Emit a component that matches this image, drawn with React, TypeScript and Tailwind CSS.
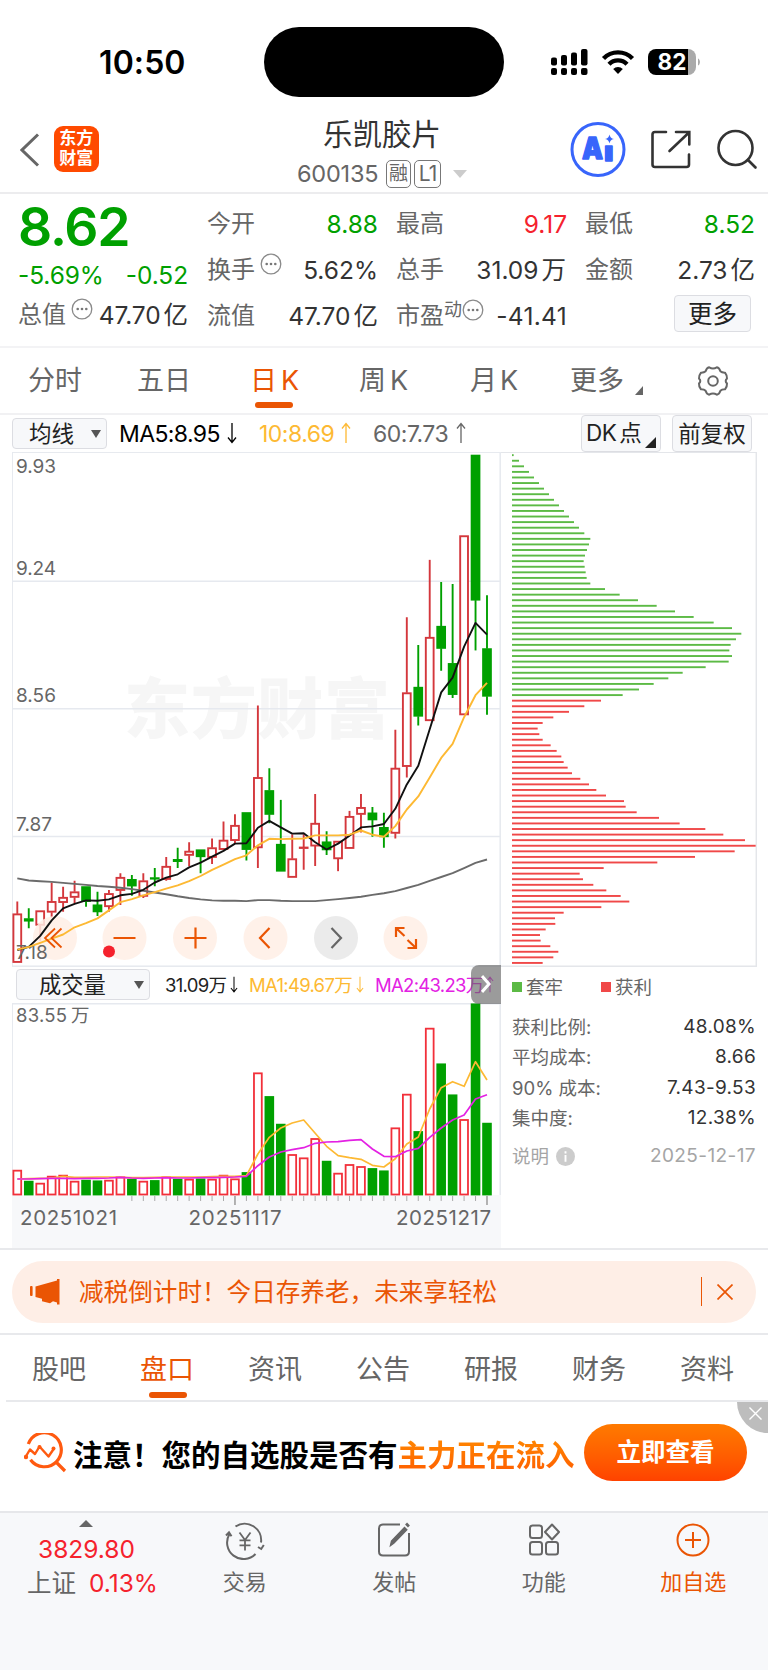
import { ReactNode } from "react";

// [high, top, bottom, low, rising] for each day, measured down from the top of the chart
type Candle = [number, number, number, number, 0 | 1];

const candles: Candle[] = [
  [1340, 1376, 1517, 1517, 1],
  [1360, 1390, 1397, 1418, 0],
  [1367, 1367, 1409, 1455, 1],
  [1285, 1340, 1371, 1387, 1],
  [1297, 1328, 1343, 1370, 1],
  [1280, 1312, 1328, 1345, 1],
  [1297, 1297, 1340, 1355, 0],
  [1312, 1350, 1370, 1382, 0],
  [1307, 1317, 1355, 1370, 1],
  [1258, 1270, 1308, 1350, 1],
  [1263, 1276, 1295, 1323, 0],
  [1258, 1280, 1325, 1330, 1],
  [1243, 1271, 1275, 1296, 0],
  [1211, 1238, 1276, 1280, 1],
  [1184, 1218, 1224, 1243, 0],
  [1168, 1194, 1206, 1238, 1],
  [1190, 1190, 1210, 1258, 0],
  [1157, 1184, 1212, 1231, 1],
  [1108, 1162, 1189, 1190, 1],
  [1087, 1119, 1163, 1170, 1],
  [1082, 1082, 1189, 1221, 0],
  [771, 980, 1184, 1243, 1],
  [953, 1018, 1087, 1113, 0],
  [1045, 1174, 1252, 1252, 0],
  [1145, 1216, 1270, 1270, 1],
  [1145, 1182, 1186, 1248, 1],
  [1028, 1113, 1179, 1237, 1],
  [1136, 1167, 1190, 1205, 0],
  [1165, 1165, 1216, 1252, 1],
  [1077, 1093, 1186, 1186, 1],
  [1028, 1067, 1087, 1140, 1],
  [1066, 1083, 1103, 1152, 0],
  [1082, 1125, 1152, 1184, 0],
  [841, 953, 1142, 1157, 1],
  [515, 734, 948, 980, 1],
  [595, 718, 802, 829, 0],
  [348, 573, 815, 815, 1],
  [412, 541, 605, 670, 0],
  [418, 649, 739, 749, 0],
  [278, 278, 798, 798, 1],
  [44, 44, 465, 611, 0],
  [451, 606, 744, 798, 0],
];

const ma5 = [
  1481, 1472, 1440, 1395, 1360, 1347, 1337, 1338, 1334, 1322, 1318, 1306, 1285, 1271, 1261, 1241, 1227, 1210, 1193, 1172, 1171,
  1126, 1106, 1125, 1143, 1142, 1168, 1189, 1172, 1149, 1125, 1122, 1115, 1071, 1000, 946, 840, 733, 690, 600, 531, 565,
];
const ma10 = [
  1480, 1472, 1460, 1448, 1436, 1415, 1403, 1389, 1366, 1342, 1333, 1322, 1313, 1303, 1293, 1281, 1266, 1248, 1233, 1217, 1206,
  1177, 1158, 1159, 1158, 1157, 1148, 1148, 1148, 1146, 1134, 1146, 1152, 1121, 1073, 1035, 980, 923, 882, 805, 741, 705,
];
const ma60 = [
  1273, 1279, 1281, 1283, 1286, 1289, 1292, 1295, 1297, 1300, 1304, 1309, 1314, 1319, 1325, 1330, 1334, 1337, 1338, 1338, 1339,
  1336, 1336, 1338, 1339, 1339, 1339, 1336, 1333, 1330, 1326, 1321, 1316, 1310, 1301, 1292, 1280, 1269, 1258, 1243, 1228, 1218,
];

const volumes = [
  630, 663, 669, 648, 645, 663, 660, 662, 660, 650, 657, 663, 661, 650, 657, 657, 656, 657, 645, 656, 637,
  338, 409, 492, 583, 593, 535, 603, 639, 613, 619, 625, 632, 503, 402, 514, 204, 311, 404, 478, 131, 489,
];
const volMa1 = [
  658, 657, 656, 655, 650, 653, 653, 652, 652, 653, 654, 654, 653, 652, 652, 652, 652, 651, 650, 650, 648,
  583, 533, 505, 490, 481, 521, 560, 588, 594, 599, 617, 622, 597, 553, 532, 448, 384, 366, 380, 306, 361,
];
const volMa2 = [
  658, 658, 657, 656, 656, 657, 656, 656, 655, 653, 655, 656, 655, 654, 655, 655, 654, 654, 653, 652, 650,
  618, 592, 577, 570, 564, 551, 547, 546, 542, 540, 568, 590, 591, 574, 566, 533, 505, 481, 466, 418, 405,
];

// chip distribution, top price to bottom price
const trapped = [
  5, 21, 36, 51, 66, 81, 96, 111, 126, 141, 156, 171, 186, 201, 217, 235, 231, 225, 219, 215, 218, 221, 224, 235, 279, 323, 378,
  434, 489, 545, 605, 660, 688, 672, 656, 652, 660, 650, 581, 512, 469, 425, 381, 332,
];
const profit = [
  267, 217, 171, 124, 92, 77, 82, 92, 116, 134, 148, 155, 167, 180, 205, 231, 253, 282, 336, 341, 374, 441, 503, 580, 634, 699,
  731, 668, 549, 436, 275, 203, 213, 244, 283, 326, 352, 268, 155, 129, 130, 101, 84, 86, 115, 139, 124, 92,
];

const x = (i: number) => 5.3 + i * 11.456;
const y = (v: number) => v / 2.9037 - 12;
const vy = (v: number) => (v - 130) / 3;

const line = (data: number[], scale: (v: number) => number) =>
  data.map((v, i) => `${x(i).toFixed(1)},${scale(v).toFixed(1)}`).join(" ");

function Arrow({ up, className }: { up?: boolean; className?: string }) {
  return (
    <svg viewBox="0 0 10 22" className={className} fill="none" stroke="currentColor" strokeWidth="1.3">
      {up ? <path d="M5 21V1.5M1 6.5l4-5 4 5" /> : <path d="M5 1v19.5M1 15.5l4 5 4-5" />}
    </svg>
  );
}

function Dots() {
  return (
    <svg viewBox="0 0 22 22" className="w-[22px] h-[22px] -mt-3 shrink-0" fill="none" stroke="#8a8a8a" strokeWidth="1.3">
      <circle cx="11" cy="11" r="9.8" />
      <g fill="#777" stroke="none">
        <circle cx="6.7" cy="11" r="1.3" />
        <circle cx="11" cy="11" r="1.3" />
        <circle cx="15.3" cy="11" r="1.3" />
      </g>
    </svg>
  );
}

function Stat({ label, value, color = "text-[#333]" }: { label: ReactNode; value: ReactNode; color?: string }) {
  return (
    <div className="h-[46px] flex items-center justify-between">
      <span className="flex items-center text-[#666] text-[24px]">{label}</span>
      <span className={color}>{value}</span>
    </div>
  );
}

function StatusBar() {
  return (
    <div className="h-[98px] flex shrink-0 relative">
      <div className="w-[264px] pl-[99px] pt-[43px] text-[32px] leading-[40px] font-semibold text-black tracking-[0.1px]">10:50</div>
      <div className="mt-[27px] w-[240px] h-[70px] rounded-full bg-black" />
      <svg viewBox="0 0 160 30" className="ml-[45px] mt-[47px] w-[160px] h-[30px]">
        <g fill="#000">
          <rect x="2" y="10.5" width="6" height="8" rx="2" />
          <rect x="12" y="8" width="6" height="10.5" rx="2" />
          <rect x="22" y="5.5" width="6" height="13" rx="2" />
          <rect x="32" y="2" width="6.5" height="16.5" rx="2" />
          <rect x="2" y="21" width="6" height="7" rx="2" />
          <rect x="12" y="21" width="6" height="7" rx="2" />
          <rect x="22" y="21" width="6" height="7" rx="2" />
          <rect x="32" y="21" width="6.5" height="7" rx="2" />
        </g>
        <g fill="none" stroke="#000" strokeWidth="4.4">
          <path d="M54.5 11.5a20.3 20.3 0 0 1 29 0" />
          <path d="M60 17.2a12.6 12.6 0 0 1 18 0" />
        </g>
        <path d="M69 27l-4.8-5a6.8 6.8 0 0 1 9.6 0z" fill="#000" />
        <path d="M107 2h32v26h-32a8 8 0 0 1-8-8v-10a8 8 0 0 1 8-8z" fill="#000" />
        <path d="M139 2a8 8 0 0 1 8 8v10a8 8 0 0 1-8 8z" fill="#aaa" />
        <path d="M149 11.5c2.6 1 2.6 6 0 7z" fill="#aaa" />
        <text x="123" y="23.3" fontSize="22.5" fontWeight="700" fill="#fff" textAnchor="middle">82</text>
      </svg>
    </div>
  );
}

function Header() {
  return (
    <div className="h-[96px] flex items-start border-b-2 border-[#ececee]">
      <svg viewBox="0 0 20 34" className="ml-[20px] mt-[35px] w-[20px] h-[34px]" fill="none" stroke="#666" strokeWidth="3">
        <path d="M18 1.5L2 17l16 15.500" />
      </svg>
      <div className="ml-[13.500px] mt-[28px] w-[45.500px] h-[46px] rounded-[9px] bg-[#ff4a00] text-white text-[17px] leading-[19.500px] font-semibold text-center pt-[3px]">
        东方
        <br />
        财富
      </div>
      <div className="ml-[198px] mt-[17px] w-[170px] flex flex-col">
        <div className="ml-[26px] h-[39px] text-[29.500px] leading-[38px] text-[#333] whitespace-nowrap">乐凯胶片</div>
        <div className="mt-[5px] flex items-center h-[30px] text-[23.500px] leading-[30px] text-[#666]">
          <span className="w-[89px] tracking-[-0.2px]">600135</span>
          <span className="w-[25px] h-[28px] rounded-[5px] border-[1.500px] border-[#777] text-[19px] leading-[25px] text-center">融</span>
          <span className="ml-[3px] w-[27px] h-[28px] rounded-[5px] border-[1.500px] border-[#777] text-[21px] leading-[25px] text-center tracking-[-1px]">L1</span>
          <svg viewBox="0 0 14 8" className="ml-[12px] w-[14px] h-[8px] shrink-0">
            <path d="M0 0h14L7 8z" fill="#ccc" />
          </svg>
        </div>
      </div>
      <svg viewBox="0 0 200 60" className="ml-[103px] mt-[22px] w-[200px] h-[60px] shrink-0 -mr-4" fill="none">
        <circle cx="28" cy="29.500" r="26" stroke="#3865fb" strokeWidth="3" />
        <g fill="#3865fb" stroke="#3865fb" strokeWidth="1.400" strokeLinejoin="round" fontWeight="900">
          <text x="12" y="39" fontSize="30" textLength="21" lengthAdjust="spacingAndGlyphs">A</text>
          <text x="34" y="40.500" fontSize="27" textLength="9.500" lengthAdjust="spacingAndGlyphs">ı</text>
        </g>
        <path d="M39.500 14.500c.8 3 1.500 3.700 4.500 4.500-3 .8-3.700 1.500-4.500 4.500-.8-3-1.500-3.700-4.500-4.500 3-.8 3.700-1.500 4.500-4.500z" fill="#3865fb" />
        <g stroke="#333" strokeWidth="2.600" strokeLinecap="round">
          <path d="M96 12H85q-2.500 0-2.500 2.500v30q0 2.500 2.500 2.500h31.500q2.500 0 2.500-2.500V34.500" />
          <path d="M106 12h13.300v12.500M119 12.500L99.500 31" />
          <circle cx="165.500" cy="28" r="17" />
          <path d="M178 40l7.500 7.500" />
        </g>
      </svg>
    </div>
  );
}

function Quote() {
  return (
    <div className="h-[154px] pt-[7px] pl-[18px] pr-[13px] grid grid-cols-4 gap-x-[19px] text-[24.500px] leading-[30px] whitespace-nowrap border-b-2 border-[#f3f3f5]">
      <div>
        <div className="h-[53px] -mt-px flex items-center text-[53.500px] leading-[53px] font-semibold text-[#00a000] tracking-[-1.200px]">8.62</div>
        <div className="h-[45px] flex items-center justify-between text-[#00a000] tracking-[-0.100px]">
          <span>-5.69%</span>
          <span>-0.52</span>
        </div>
        <div className="h-[34px] flex items-center justify-between text-[#333] tracking-[-0.100px]">
          <span className="flex items-center text-[#666] text-[24px]">总值<span className="w-[5px]" /><Dots /></span>
          <span>47.70<span className="ml-[3px]">亿</span></span>
        </div>
      </div>
      <div>
        <Stat label="今开" value="8.88" color="text-[#00a000] -mr-px" />
        <Stat label={<>换手<span className="w-[5px]" /><Dots /></>} value="5.62%" color="text-[#333] -mr-px" />
        <Stat label="流值" value={<>47.70<span className="ml-[3px]">亿</span></>} color="text-[#333] -mr-px" />
      </div>
      <div>
        <Stat label="最高" value="9.17" color="text-[#f5222d] -mr-px" />
        <Stat label="总手" value={<>31.09<span className="ml-[3px]">万</span></>} />
        <Stat label={<>市盈<span className="text-[18px] -mt-3">动</span><Dots /></>} value="-41.41" color="text-[#333] -mr-px tracking-[0.3px]" />
      </div>
      <div>
        <Stat label="最低" value="8.52" color="text-[#00a000]" />
        <Stat label="金额" value={<>2.73<span className="ml-[3px]">亿</span></>} />
        <div className="h-[42px] flex items-center justify-end pr-1">
          <span className="w-[77px] h-[37px] rounded-[4px] border border-[#dcdde2] bg-[#f7f8fa] text-[#222] text-center leading-[36px]">更多</span>
        </div>
      </div>
    </div>
  );
}

function PeriodTabs() {
  return (
    <div className="h-[67px] flex items-center pt-[2px] border-b-2 border-[#f1f1f3] text-[27px] leading-[40px] text-[#666] whitespace-nowrap">
      <span className="w-[110px] pl-[28px]">分时</span>
      <span className="w-[115px] pl-[27px]">五日</span>
      <span className="w-[108px] pl-[25px] flex text-[#ea5504] relative">
        日<span className="ml-[4px]">K</span>
        <span className="absolute left-[30px] top-[41px] w-[38px] h-[6px] rounded-full bg-[#ea5504]" />
      </span>
      <span className="w-[112px] pl-[26px] flex">周<span className="ml-[4px]">K</span></span>
      <span className="w-[98px] pl-[25px] flex">月<span className="ml-[3px]">K</span></span>
      <span className="w-[152px] pl-[27px] flex items-center">
        更多
        <svg viewBox="0 0 8 9" className="ml-[11px] mt-[18px] w-[8px] h-[9px]"><path d="M8 0v9H0z" fill="#666" /></svg>
      </span>
      <svg viewBox="0 0 32 32" className="ml-[2px] w-[32px] h-[32px] -mt-px" fill="none" stroke="#666" strokeWidth="2">
        <path d="M12.200 2.300q3.800 2.200 7.600 0 2.600.6 3.600 4 1.500 1.500 4.600 1.400 2.300 3 2 5.800-2.600 2.500 0 5 .3 2.800-2 5.800-3.100-.1-4.600 1.400-1 3.400-3.600 4-3.800-2.200-7.600 0-2.600-.6-3.600-4-1.500-1.500-4.600-1.400-2.300-3-2-5.800 2.600-2.500 0-5-.3-2.800 2-5.800 3.100.1 4.600-1.400 1-3.400 3.600-4z" strokeLinejoin="round" />
        <circle cx="16" cy="16" r="4.800" />
      </svg>
    </div>
  );
}

function ChartToolbar() {
  return (
    <div className="h-[37px] flex items-center pl-[12px] pr-[16px] text-[22.500px] leading-[28px] whitespace-nowrap">
      <div className="w-[95px] h-[31px] mt-px flex items-center pl-[16px] rounded-[4px] border border-[#dcdde2] bg-[#f7f8fa] text-[#222]">
        均线
        <svg viewBox="0 0 10 8" className="ml-[17px] w-[10px] h-[8px]"><path d="M0 0h10L5 8z" fill="#555" /></svg>
      </div>
      <span className="ml-[12px] mt-px w-[108px] text-black text-[23px] tracking-[-0.600px]">MA5:8.95</span>
      <Arrow className="w-[10px] h-[22px]" />
      <span className="ml-[22px] mt-px w-[82px] text-[#fdb933] text-[23px] tracking-[-0.500px]">10:8.69</span>
      <Arrow up className="w-[10px] h-[22px] text-[#fdb933]" />
      <span className="ml-[22px] mt-px w-[83px] text-[#666] text-[23px] tracking-[-0.500px]">60:7.73</span>
      <Arrow up className="w-[10px] h-[22px] text-[#666]" />
      <div className="ml-auto w-[80px] h-[37px] flex items-center pl-[4px] rounded-[4px] border border-[#dcdde2] bg-[#f7f8fa] text-[#222] tracking-[-0.500px]">
        DK<span className="ml-[3px]">点</span>
        <svg viewBox="0 0 11 11" className="ml-auto mr-[4px] mt-[18px] w-[11px] h-[11px]"><path d="M11 0v11H0z" fill="#222" /></svg>
      </div>
      <div className="ml-[11px] w-[80px] h-[37px] leading-[36px] text-center rounded-[4px] border border-[#dcdde2] bg-[#f7f8fa] text-[#222]">前复权</div>
    </div>
  );
}

function KLine() {
  return (
    <svg viewBox="0 0 489 515" className="block w-[489px] h-[515px]">
      <text x="112" y="281" fontSize="66" fontWeight="900" fill="#f6f6f6" textLength="266">东方财富</text>
      <g stroke="#e6e9ef" strokeWidth="1.500" fill="none">
        <path d="M0 129.300H489M0 256.700H489M0 384.500H489" />
        <rect x=".2" y=".2" width="488" height="514" />
      </g>
      {candles.map(([high, top, bottom, low, up], i) => (
        <g key={i} stroke={up ? "#d4373c" : "#00a000"} fill={up ? "#fff" : "#00a000"} strokeWidth="1.900">
          <path d={`M${x(i)} ${y(high)}V${y(top)}M${x(i)} ${y(bottom)}V${y(low)}`} />
          <rect x={x(i) - 3.9} y={y(top) + 0.5} width="7.800" height={Math.max(y(bottom) - y(top) - 1, 0.4)} />
        </g>
      ))}
      <g fill="#ffeee5" fillOpacity=".85">
        <circle cx="43" cy="486" r="22" />
        <circle cx="112.500" cy="486" r="22" />
        <circle cx="183" cy="486" r="22" />
        <circle cx="253.500" cy="486" r="22" />
        <circle cx="324" cy="486" r="22" fill="#e8e8e8" />
        <circle cx="393.500" cy="486" r="22" />
      </g>
      <g fontSize="19" fill="#666">
        <text x="4" y="20.500" textLength="40">9.93</text>
        <text x="4" y="122.500" textLength="40">9.24</text>
        <text x="4" y="250" textLength="40">8.56</text>
        <text x="4" y="378.500">7.87</text>
        <text x="4" y="507">7.18</text>
      </g>
      <g fill="none" strokeWidth="1.900" strokeLinejoin="round">
        <polyline points={line(ma60, y)} stroke="#6b6b6b" />
        <polyline points={line(ma5, y)} stroke="#111" />
        <polyline points={line(ma10, y)} stroke="#fdb933" />
      </g>
      <g fill="none" stroke="#ea5504" strokeWidth="2.200">
        <path d="M43 476.500L33 486l10 9.500M49.500 476.500l-10 9.500 10 9.500" strokeWidth="1.800" />
        <path d="M101.500 486h22M172.500 486h22M183.500 475.500v21" />
        <path d="M257.500 476l-9.500 10 9.500 10" />
        <path d="M319.500 476l9.500 10-9.500 10" stroke="#666" />
        <path d="M384 485v-9h8.500M384.500 476.500l8 7.500M404 487v9h-8.500M403.500 495.500l-8-7.500" />
      </g>
      <circle cx="97" cy="499.500" r="6" fill="#f5222d" />
    </svg>
  );
}

function Volume() {
  return (
    <svg viewBox="0 0 489 245" className="block w-[489px] h-[245px]">
      <rect y="192" width="489" height="53" fill="#f7f8fa" />
      <path d="M.2 192V.7H488.200V192" stroke="#e6e9ef" strokeWidth="1.500" fill="none" />
      <g fontSize="18.500" fill="#666">
        <text x="4" y="19" textLength="51">83.55</text>
        <text x="59" y="19">万</text>
      </g>
      {volumes.map((v, i) => {
        const up = candles[i][4];
        return (
          <rect
            key={i}
            x={x(i) - 3.9}
            y={vy(v) + 1}
            width="7.800"
            height={190.5 - vy(v)}
            fill={up ? "#fff" : "#00a000"}
            stroke={up ? "#f2303a" : "#00a000"}
            strokeWidth="1.800"
          />
        );
      })}
      <g fill="none" strokeWidth="1.700" strokeLinejoin="round">
        <polyline points={line(volMa1, vy)} stroke="#fdb933" />
        <polyline points={line(volMa2, vy)} stroke="#e321e3" />
      </g>
      {volumes.map((_, i) =>
        i > 9 ? <path key={i} d={`M${x(i)} 193v${i === 19 || i === 41 ? 9 : 5}`} stroke="#aaa" strokeWidth={i === 19 || i === 41 ? 1.8 : 1} /> : null
      )}
      <g fontSize="20.500" fill="#666">
        <text x="8" y="222" textLength="97">20251021</text>
        <text x="176.500" y="222" textLength="93">20251117</text>
        <text x="384" y="222" textLength="95">20251217</text>
      </g>
    </svg>
  );
}

function Chips() {
  return (
    <svg viewBox="0 0 256 515" className="block w-[256px] h-[515px]">
      <path d="M0 .2H255.300V514.200H0" stroke="#e4e6ea" strokeWidth="1.500" fill="none" />
      {[...trapped, ...profit].map((w, i) => (
        <rect key={i} x="11" y={2.2 + i * 5.58} width={w / 3} height="1.900" fill={i < trapped.length ? "#5cba45" : "#f04848"} />
      ))}
    </svg>
  );
}

const costs = [
  ["获利比例:", "48.08%"],
  ["平均成本:", "8.66"],
  ["90% 成本:", "7.43-9.53"],
  ["集中度:", "12.38%"],
];

function Charts() {
  return (
    <div className="h-[798px] flex pl-[12px] border-b-2 border-[#e8e9ec]">
      <div className="w-[489px]">
        <KLine />
        <div className="h-[36px] relative flex items-center pl-[4px] text-[18.500px] leading-[30px] whitespace-nowrap">
          <div className="w-[134px] h-[31px] flex items-center pl-[22px] rounded-[4px] border border-[#dcdde2] bg-[#f7f8fa] text-[22.300px] text-[#222]">
            成交量
            <svg viewBox="0 0 10 8" className="ml-[28px] w-[10px] h-[8px]"><path d="M0 0h10L5 8z" fill="#555" /></svg>
          </div>
          <span className="ml-[15px] w-[65px] text-[#222] tracking-[-0.700px]">31.09万</span>
          <Arrow className="w-[8px] h-[17px]" />
          <span className="ml-[11px] w-[107px] text-[#fdb933] tracking-[-0.700px]">MA1:49.67万</span>
          <Arrow className="w-[8px] h-[17px] text-[#fdb933]" />
          <span className="ml-[11px] w-[111px] text-[#e321e3] tracking-[-0.700px]">MA2:43.23万</span>
          <Arrow up className="w-[8px] h-[17px] text-[#e321e3]" />
          <div className="absolute right-0 -top-[2px] w-[30px] h-[39px] rounded-l-[8px] bg-[#666]/65 flex items-center justify-center">
            <svg viewBox="0 0 10 18" className="w-[10px] h-[18px]" fill="none" stroke="#fff" strokeWidth="3"><path d="M1 1l7 8-7 8" /></svg>
          </div>
        </div>
        <Volume />
      </div>
      <div className="w-[256px]">
        <Chips />
        <div className="pl-[11px] pr-px text-[18.500px] leading-[30px] text-[#666]">
          <div className="h-[41px] flex items-center">
            <span className="w-[10px] h-[10px] bg-[#5cba45]" />
            <span className="ml-[4px] w-[75px]">套牢</span>
            <span className="w-[10px] h-[10px] bg-[#f04848]" />
            <span className="ml-[4px]">获利</span>
          </div>
          <div className="pt-[4px]">
            {costs.map(([label, value]) => (
              <div key={label} className="h-[30.500px] flex items-center justify-between">
                <span>{label}</span>
                <span className="text-[#333] text-[19px] tracking-[0.3px]">{value}</span>
              </div>
            ))}
          </div>
          <div className="mt-[7px] h-[31px] flex items-center text-[#a5a5a5]">
            说明
            <svg viewBox="0 0 20 20" className="ml-[7px] w-[19px] h-[19px]">
              <circle cx="10" cy="10" r="10" fill="#ccc" />
              <path d="M10 4.500v2.300M10 8.500v7" stroke="#fff" strokeWidth="2" />
            </svg>
            <span className="ml-auto text-[19px] tracking-[0.4px]">2025-12-17</span>
          </div>
        </div>
      </div>
    </div>
  );
}

function Notice() {
  return (
    <div className="h-[86px] pt-[11px] px-[12px] border-b-2 border-[#e8e9ec]">
      <div className="h-[62px] flex items-center rounded-full bg-[#feeee6] text-[#ea5504] text-[24.600px] leading-[36px] pl-[18px] pr-[23px] whitespace-nowrap">
        <svg viewBox="0 0 30 26" className="w-[30px] h-[26px]" fill="#ea5504">
          <rect x="0" y="7" width="2.600" height="10" rx="1" />
          <path d="M5.500 7.500L27 1.500v-1.500h2.500v25.500H27v-2l-4-1.200-3 2-8-2v-2.500l-6.500-1.800z" />
        </svg>
        <span className="ml-[19px]">减税倒计时！今日存养老，未来享轻松</span>
        <span className="ml-auto w-[1.500px] h-[29px] bg-[#ea5504]" />
        <svg viewBox="0 0 16 16" className="ml-[15px] w-[16px] h-[16px]" fill="none" stroke="#ea5504" strokeWidth="1.700">
          <path d="M.5.5l15 15M15.500.5l-15 15" />
        </svg>
      </div>
    </div>
  );
}

const sections = ["股吧", "盘口", "资讯", "公告", "研报", "财务", "资料"];

function SectionTabs() {
  return (
    <div className="h-[67px] pl-[6px]">
      <div className="h-full flex items-center pt-[4px] pl-[26px] border-b-2 border-[#e8e9ec] text-[27px] leading-[40px] text-[#666]">
        {sections.map((name) => (
          <div key={name} className={name === "盘口" ? "w-[108px] shrink-0 relative text-[#ea5504]" : "w-[108px] shrink-0 last:w-[60px]"}>
            {name}
            {name === "盘口" && <span className="absolute left-[9px] top-[42px] w-[38px] h-[6px] rounded-full bg-[#ea5504]" />}
          </div>
        ))}
      </div>
    </div>
  );
}

function Promo() {
  return (
    <div className="h-[109px] relative overflow-hidden flex items-start pl-[24px] whitespace-nowrap">
      <svg viewBox="0 0 43 42" className="mt-[31px] w-[43px] h-[42px]" fill="none" stroke="#ff5a10" strokeWidth="3.200">
        <path d="M4.300 11A17 17 0 1 1 6.500 26.700M31.500 28.500L41 38" />
        <path d="M1.500 24L6 16.500l5 4.500 4.500-7.500 9 10 5.500-8" strokeWidth="2.400" strokeLinejoin="round" />
        <g fill="#ff5a10" stroke="none">
          <circle cx="2" cy="24" r="2.200" />
          <circle cx="15.500" cy="14" r="2" />
          <circle cx="29.500" cy="15.500" r="2" />
        </g>
      </svg>
      <div className="ml-[6px] mt-[33px] w-[511px] flex text-[29.500px] leading-[40px] font-bold text-black">
        <span>注意！您的自选股是否有</span>
        <span className="bg-linear-to-b from-[#ff8a00] to-[#ff5a00] bg-clip-text text-transparent">主力正在流入</span>
      </div>
      <div className="mt-[22px] w-[163px] h-[57px] rounded-full bg-linear-to-b from-[#ff7a00] to-[#ff4200] text-white text-[24.500px] leading-[56px] font-bold text-center shrink-0">
        立即查看
      </div>
      <div className="absolute right-0 top-[-2px] w-[31px] h-[33px] rounded-bl-[31px] bg-[#bdbdbd]">
        <svg viewBox="0 0 14 14" className="ml-[12px] mt-[7px] w-[13px] h-[13px]" stroke="#fff" strokeWidth="1.500">
          <path d="M.5.5l13 13M13.500.5l-13 13" />
        </svg>
      </div>
    </div>
  );
}

function NavItem({ label, children, className }: { label: string; children: ReactNode; className?: string }) {
  return (
    <div className={className ?? "text-[#666]"}>
      <div className="w-[149.500px] flex flex-col items-center pt-[7px]">
        <svg viewBox="0 0 40 40" className="w-[40px] h-[40px]" fill="none" stroke="currentColor" strokeWidth="2">
          {children}
        </svg>
        <span className="mt-[5px] text-[22px] leading-[34px]">{label}</span>
      </div>
    </div>
  );
}

function BottomNav() {
  return (
    <div className="h-[159px] flex bg-[#f7f8fa] border-t-2 border-[#e6e7ea] text-[24.500px] leading-[34px] whitespace-nowrap">
      <div className="w-[171px] flex flex-col pt-[7px]">
        <svg viewBox="0 0 14 7" className="ml-[79px] w-[14px] h-[7px]"><path d="M0 7L7 0l7 7z" fill="#666" /></svg>
        <span className="mt-[5px] ml-[38px] text-[#f5222d]">3829.80</span>
        <div className="flex ml-[27px] text-[#666]">
          上证<span className="ml-[13px] text-[#f5222d]">0.13%</span>
        </div>
      </div>
      <NavItem label="交易">
        <path d="M10.500 6.500A16.500 16.500 0 0 1 36 22.500M30.500 34A16.500 16.500 0 0 1 4.500 14M1 15.500l3-3.200 2.500 4M33 27l3.200 2 2.600-4" />
        <path d="M14.500 12.500l5.500 7.500 5.500-7.500M20 20v10.500M14.500 20.300h11M14.500 25.300h11" strokeWidth="1.800" />
      </NavItem>
      <NavItem label="发帖">
        <path d="M26 4.500H9q-4 0-4 4v23q0 4 4 4h22q4 0 4-4V13" />
        <path d="M16.500 25.500l1-4.500L30.500 7.500l2.300 2.300L20 23z" fill="currentColor" strokeWidth="1.400" />
        <path d="M32.500 6l2-2" strokeWidth="4" />
      </NavItem>
      <NavItem label="功能">
        <rect x="6" y="5.500" width="12" height="12.500" rx="2.500" />
        <rect x="6" y="22" width="12" height="12.500" rx="2.500" />
        <rect x="22" y="22" width="12" height="12.500" rx="2.500" />
        <path d="M28 4.500l7 7.500-7 7.500-7-7.500z" strokeLinejoin="round" />
      </NavItem>
      <NavItem label="加自选" className="text-[#ea5504]">
        <circle cx="20" cy="20" r="15.500" />
        <path d="M12 20h16M20 12v16" />
      </NavItem>
    </div>
  );
}

export default function App() {
  return (
    <div className="w-[768px] h-[1670px] overflow-hidden flex flex-col bg-white font-['Inter','Noto_Sans_CJK_SC',sans-serif]">
      <StatusBar />
      <Header />
      <Quote />
      <PeriodTabs />
      <ChartToolbar />
      <Charts />
      <Notice />
      <SectionTabs />
      <Promo />
      <BottomNav />
    </div>
  );
}
